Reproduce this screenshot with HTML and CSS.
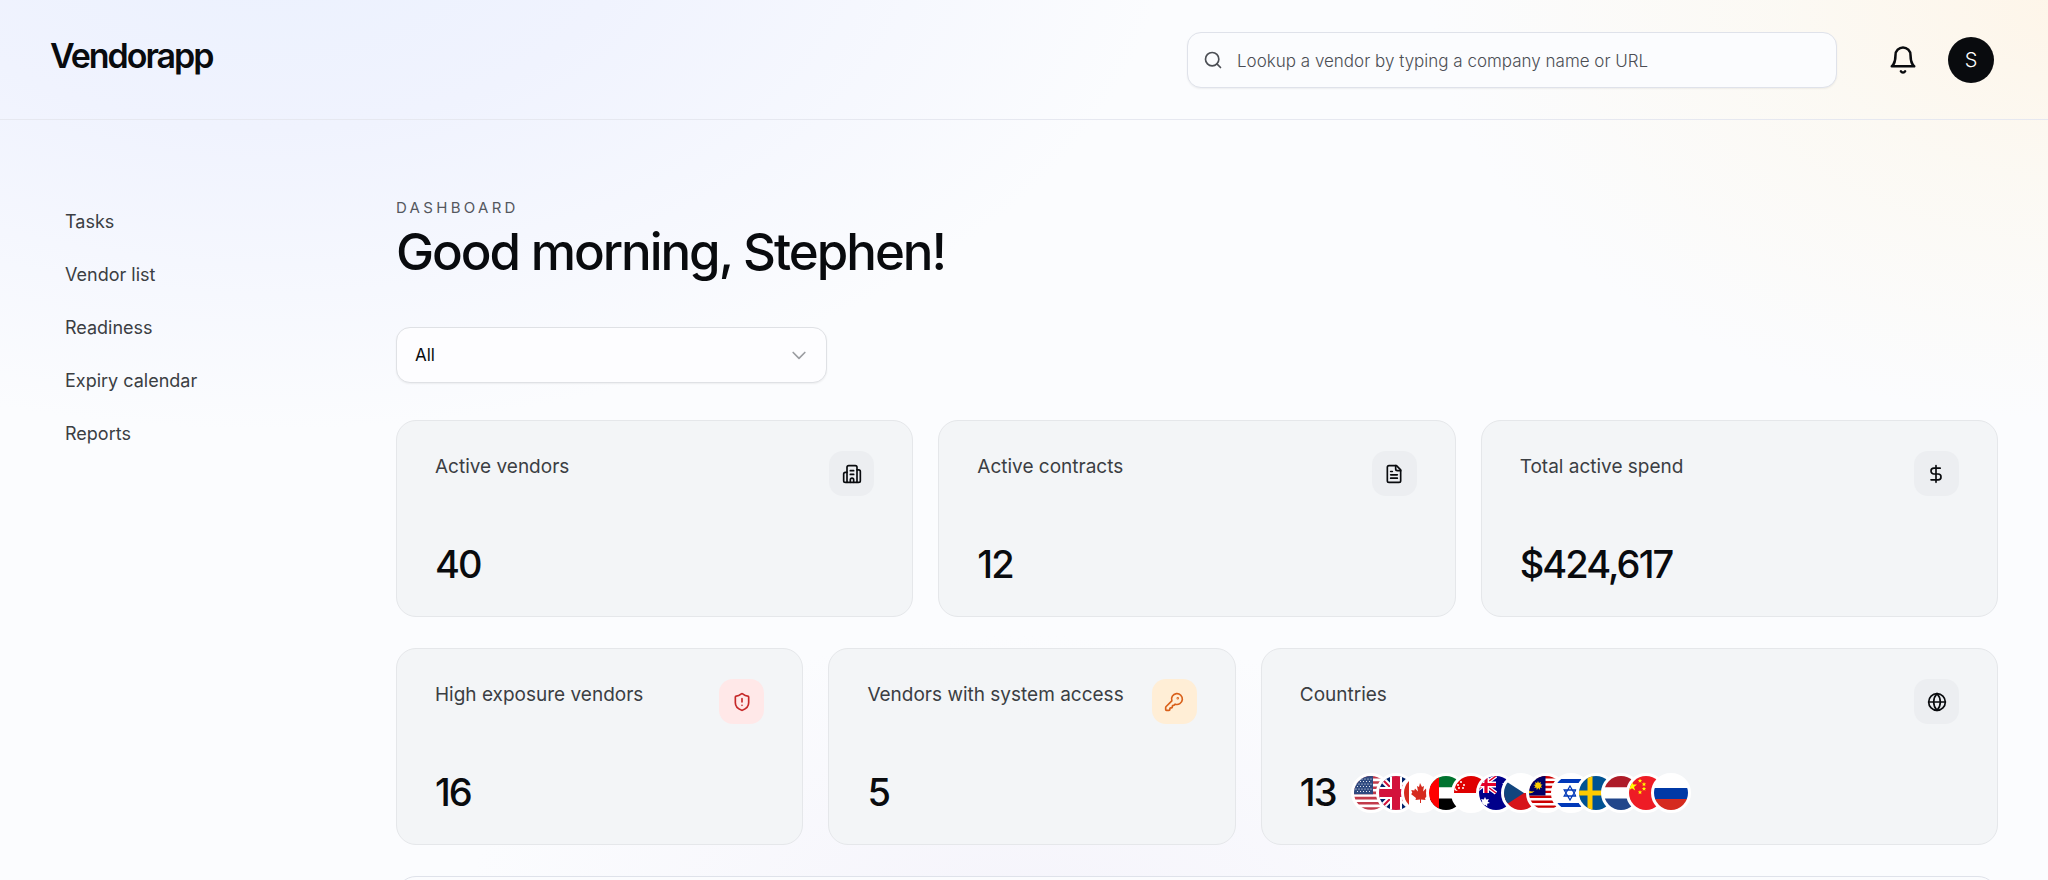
FILE: index.html
```html
<!DOCTYPE html>
<html lang="en">
<head>
    <meta charset="UTF-8">
    <meta name="viewport" content="width=device-width, initial-scale=1.0">
    <title>Vendorapp</title>
    <link rel="stylesheet" href="styles.css">
</head>
<body>
    <header class="header">
        <a href="#" class="logo">Vendorapp</a>
        <div class="header-right">
            <label class="search">
                <svg class="search-icon" viewBox="0 0 24 24"><circle cx="11" cy="11" r="8"/><path d="m21 21-4.3-4.3"/></svg>
                <input type="text" aria-label="Lookup a vendor" placeholder="Lookup a vendor by typing a company name or URL">
            </label>
            <button class="bell" aria-label="Notifications">
                <svg viewBox="0 0 24 24"><path d="M6 8a6 6 0 0 1 12 0c0 7 3 9 3 9H3s3-2 3-9"/><path d="M10.3 21a1.94 1.94 0 0 0 3.4 0"/></svg>
            </button>
            <button class="avatar">S</button>
        </div>
    </header>

    <div class="layout">
        <nav class="sidebar">
            <a href="#">Tasks</a>
            <a href="#">Vendor list</a>
            <a href="#">Readiness</a>
            <a href="#">Expiry calendar</a>
            <a href="#">Reports</a>
        </nav>

        <main class="main">
            <p class="eyebrow">DASHBOARD</p>
            <h1>Good morning, Stephen!</h1>

            <div class="filter">
                <select aria-label="Filter vendors">
                    <option>All</option>
                </select>
                <svg class="chevron" viewBox="0 0 24 24"><path d="m5 9 7 7 7-7"/></svg>
            </div>

            <div class="cards cards-top">
                <section class="card">
                    <div class="card-head">
                        <h2>Active vendors</h2>
                        <span class="icon">
                            <svg viewBox="0 0 24 24"><path d="M6 22V4a2 2 0 0 1 2-2h8a2 2 0 0 1 2 2v18Z"/><path d="M6 10H4a2 2 0 0 0-2 2v8a2 2 0 0 0 2 2h2"/><path d="M18 7h2a2 2 0 0 1 2 2v11a2 2 0 0 1-2 2h-2"/><path d="M10 8h4M10 12.500h4M10 22v-3a2 2 0 0 1 4 0v3"/></svg>
                        </span>
                    </div>
                    <p class="value">40</p>
                </section>
                <section class="card">
                    <div class="card-head">
                        <h2>Active contracts</h2>
                        <span class="icon">
                            <svg viewBox="0 0 24 24"><path d="M15 2H6a2 2 0 0 0-2 2v16a2 2 0 0 0 2 2h12a2 2 0 0 0 2-2V7Z"/><path d="M14 2v4a2 2 0 0 0 2 2h4"/><path d="M10 9H8M16 13H8M16 17H8"/></svg>
                        </span>
                    </div>
                    <p class="value">12</p>
                </section>
                <section class="card">
                    <div class="card-head">
                        <h2>Total active spend</h2>
                        <span class="icon">
                            <svg viewBox="0 0 24 24"><path d="M12 2v20"/><path d="M17 5H9.5a3.5 3.5 0 0 0 0 7h5a3.5 3.5 0 0 1 0 7H6"/></svg>
                        </span>
                    </div>
                    <p class="value">$424,617</p>
                </section>
            </div>

            <div class="cards cards-bottom">
                <section class="card">
                    <div class="card-head">
                        <h2>High exposure vendors</h2>
                        <span class="icon icon-red">
                            <svg viewBox="0 0 24 24"><path d="M20 13c0 5-3.5 7.5-7.66 8.95a1 1 0 0 1-.67-.01C7.5 20.5 4 18 4 13V6a1 1 0 0 1 1-1c2 0 4.5-1.2 6.24-2.72a1.17 1.17 0 0 1 1.52 0C14.51 3.81 17 5 19 5a1 1 0 0 1 1 1z"/><path d="M12 8v4M12 16h.01"/></svg>
                        </span>
                    </div>
                    <p class="value">16</p>
                </section>
                <section class="card">
                    <div class="card-head">
                        <h2>Vendors with system access</h2>
                        <span class="icon icon-orange">
                            <svg viewBox="0 0 24 24"><path d="M2.586 17.414A2 2 0 0 0 2 18.828V21a1 1 0 0 0 1 1h3a1 1 0 0 0 1-1v-1a1 1 0 0 1 1-1h1a1 1 0 0 0 1-1v-1a1 1 0 0 1 1-1h.172a2 2 0 0 0 1.414-.586l.814-.814a6.5 6.5 0 1 0-4-4z"/><circle cx="16.5" cy="7.5" r=".5"/></svg>
                        </span>
                    </div>
                    <p class="value">5</p>
                </section>
                <section class="card">
                    <div class="card-head">
                        <h2>Countries</h2>
                        <span class="icon">
                            <svg viewBox="0 0 24 24"><circle cx="12" cy="12" r="10"/><path d="M12 2a14.5 14.5 0 0 0 0 20 14.5 14.5 0 0 0 0-20"/><path d="M2 12h20"/></svg>
                        </span>
                    </div>
                    <div class="value-row">
                        <p class="value">13</p>
                        <div class="flags">
                            <!-- United States -->
                            <svg viewBox="0 0 34 34"><path fill="#fff" d="M0 0h34v34H0z"/><path stroke="#c23b4b" stroke-width="2.6" d="M0 1.3h34M0 6.5h34M0 11.7h34M0 16.9h34M0 22.1h34M0 27.3h34M0 32.5h34"/><path fill="#2f4a80" d="M0 0h19v18.2H0z"/><path stroke="#fff" stroke-width="1.2" stroke-linecap="round" stroke-dasharray="0 3" d="M2 3h16M3.5 5.500h14M2 8h16M3.5 10.500h14M2 13h16M3.5 15.500h14"/></svg>
                            <!-- United Kingdom -->
                            <svg viewBox="0 0 34 34"><path fill="#012169" d="M0 0h34v34H0z"/><path stroke="#fff" stroke-width="6" d="m0 0 34 34M34 0 0 34"/><path stroke="#d3123b" stroke-width="2" d="m0 0 34 34M34 0 0 34"/><path stroke="#fff" stroke-width="12" d="M17 0v34M0 17h34"/><path stroke="#d3123b" stroke-width="8" d="M17 0v34M0 17h34"/></svg>
                            <!-- Canada -->
                            <svg viewBox="0 0 34 34"><path fill="#fff" d="M0 0h34v34H0z"/><path fill="#d52b1e" d="M0 0h5v34H0zM29 0h5v34h-5zM16 7l2 4 2-1-1 5.500 3-3 .7 2 3-.5-1 3 1.300 1-5 4 .5 2-4.500-.6V27h-1v-3.600l-4.500.6.5-2-5-4 1.300-1-1-3 3 .5.7-2 3 3-1-5.500 2 1z"/></svg>
                            <!-- United Arab Emirates -->
                            <svg viewBox="0 0 34 34"><path fill="#fff" d="M0 0h34v34H0z"/><path fill="#00732f" d="M0 0h34v11.300H0z"/><path d="M0 22.600h34V34H0z"/><path fill="#f00" d="M0 0h10v34H0z"/></svg>
                            <!-- Singapore -->
                            <svg viewBox="0 0 34 34"><path fill="#fff" d="M0 0h34v34H0z"/><path fill="#df0000" d="M0 0h34v17H0z"/><path fill="#fff" d="M4 3a6 6 0 0 0 0 12 7 7 0 0 1 0-12"/><g fill="#fff"><circle cx="7" cy="6" r="1"/><circle cx="4" cy="9" r="1"/><circle cx="10" cy="9" r="1"/><circle cx="5" cy="12" r="1"/><circle cx="9" cy="12" r="1"/></g></svg>
                            <!-- Australia -->
                            <svg viewBox="0 0 34 34"><path fill="#00008b" d="M0 0h34v34H0z"/><path stroke="#fff" stroke-width="4" d="m-6 0 23 17M17 0-6 17"/><path stroke="#e4002b" stroke-width="1.500" d="m-6 0 23 17M17 0-6 17"/><path stroke="#fff" stroke-width="6" d="M7 0v17M0 8.500h17"/><path stroke="#e4002b" stroke-width="3.200" d="M7 0v17M0 8.500h17"/><path fill="#fff" d="m6 21 1.200 2.600 2.700-.7-1.200 2.500 2.200 1.700-2.700.6v2.800L6 28.800l-2.200 1.700v-2.800l-2.700-.6 2.200-1.700-1.200-2.500 2.700.7zM26 5l1 2 2-.3-1.200 1.700 1 2-2.100-.7L25 11V8.700L23 7.500l2.300-.5zM27 23l1 2 2-.3-1.200 1.700 1 2-2.100-.7L26 29v-2.300l-2-1.200 2.300-.5z"/></svg>
                            <!-- Czech Republic -->
                            <svg viewBox="0 0 34 34"><path fill="#fff" d="M0 0h34v17H0z"/><path fill="#d7141a" d="M0 17h34v17H0z"/><path fill="#11457e" d="M-6 0 20 17-6 34z"/></svg>
                            <!-- Malaysia -->
                            <svg viewBox="0 0 34 34"><path fill="#fff" d="M0 0h34v34H0z"/><path stroke="#c00" stroke-width="2.400" d="M0 1.200h34M0 6.100h34M0 11h34M0 15.900h34M0 20.800h34M0 25.700h34M0 30.600h34"/><path fill="#006" d="M0 0h16.500v19.500H0z"/><path fill="#fc0" d="m9 5 .9 2 2-1-.5 2.200 2.200.5-1.800 1.300 1.400 1.800-2.300-.2.200 2.300L9.200 12l-1.400 1.900-.4-2.300-2.200.4 1.200-1.900-2-1.200 2.300-.5-.7-2.200 2.100.9zM-1 13.500a6 6 0 0 0 6.500 1.500A6 6 0 0 1-1 17z"/></svg>
                            <!-- Israel -->
                            <svg viewBox="0 0 34 34"><path fill="#fff" d="M0 0h34v34H0z"/><path fill="#0038b8" d="M0 3h34v4H0zM0 27h34v4H0z"/><path fill="none" stroke="#0038b8" stroke-width="1.300" d="m16 10 5.800 10H10.200zM16 24l5.800-10H10.200z"/></svg>
                            <!-- Sweden -->
                            <svg viewBox="0 0 34 34"><path fill="#005293" d="M0 0h34v34H0z"/><path stroke="#fecb00" stroke-width="5" d="M11 0v34M0 17h34"/></svg>
                            <!-- Netherlands -->
                            <svg viewBox="0 0 34 34"><path fill="#fff" d="M0 0h34v34H0z"/><path fill="#ae1c28" d="M0 0h34v11.300H0z"/><path fill="#21468b" d="M0 22.600h34V34H0z"/></svg>
                            <!-- China -->
                            <svg viewBox="0 0 34 34"><path fill="#ee1c25" d="M0 0h34v34H0z"/><path fill="#ff0" d="m3 5 1.200 3.600H8l-3 2.300L6.200 14.500 3 12.300-.2 14.500 1 10.900-2 8.600h3.800zM11 2.500l.6 1.500 1.600.1-1.200 1 .4 1.600-1.400-.9-1.400.9.400-1.600-1.200-1 1.600-.1zM15 6l.6 1.500 1.600.1-1.200 1 .4 1.600-1.400-.9-1.400.9.400-1.600-1.200-1 1.600-.1zM15 10.500l.6 1.500 1.600.1-1.200 1 .4 1.600-1.400-.9-1.400.9.400-1.600-1.200-1 1.600-.1zM11 14l.6 1.500 1.600.1-1.200 1 .4 1.600-1.400-.9-1.400.9.400-1.600-1.200-1 1.600-.1z"/></svg>
                            <!-- Russia -->
                            <svg viewBox="0 0 34 34"><path fill="#fff" d="M0 0h34v12H0z"/><path fill="#0039a6" d="M0 12h34v11H0z"/><path fill="#d52b1e" d="M0 23h34v11H0z"/></svg>
                        </div>
                    </div>
                </section>
            </div>

            <section class="panel"></section>
        </main>
    </div>
</body>
</html>
```
FILE: styles.css
```css
* {
    box-sizing: border-box;
}

body {
    margin: 0;
    height: 100vh;
    overflow: hidden;
    font-family: Inter, "Liberation Sans", sans-serif;
    color: #090b0e;
    background-color: #fbfcfe;
    background-image:
        radial-gradient(ellipse 900px 500px at 13% -8%, #ebf1fe, #f0f3fe 40%, rgba(251, 252, 254, 0)),
        radial-gradient(ellipse 660px 420px at 102% 0%, #fef5e8, rgba(252, 248, 239, 0.7) 45%, rgba(251, 252, 254, 0)),
        radial-gradient(ellipse 560px 280px at 50% 104%, #f5f4fb, rgba(251, 252, 254, 0));
}

h1, h2, p {
    margin: 0;
}

button, input, select {
    font-family: inherit;
    color: inherit;
}

svg {
    display: block;
}

.header {
    height: 120px;
    padding: 0 54px 0 50px;
    display: flex;
    align-items: center;
    justify-content: space-between;
    border-bottom: 1px solid #e6e8f0;
}

.logo {
    font-size: 34px;
    line-height: 40px;
    font-weight: 600;
    letter-spacing: -0.06em;
    color: inherit;
    text-decoration: none;
    padding-bottom: 8px;
}

.header-right {
    display: flex;
    align-items: center;
}

.search {
    display: flex;
    align-items: center;
    gap: 14px;
    width: 650px;
    height: 56px;
    padding: 0 15px;
    background: #fbfcfe;
    border: 1px solid #dfe2ea;
    border-radius: 14px;
    box-shadow: 0 1px 2px rgba(0, 0, 0, 0.06);
}

.search input {
    flex: 1;
    border: 0;
    padding: 2px 0 0;
    outline: none;
    background: none;
    font-size: 17px;
    font-weight: 300;
}

.search input::placeholder {
    color: #4b4e54;
    opacity: 1;
}

.search-icon, .bell svg, .chevron, .icon svg {
    fill: none;
    stroke: currentColor;
    stroke-width: 2;
    stroke-linecap: round;
    stroke-linejoin: round;
}

.search-icon {
    width: 20px;
    height: 20px;
    color: #4b4e54;
}

.bell {
    margin: 0 30px 0 51px;
    padding: 0;
    border: 0;
    background: none;
    cursor: pointer;
}

.bell svg {
    width: 30px;
    height: 30px;
}

.avatar {
    width: 46px;
    height: 46px;
    padding: 0;
    border: 0;
    border-radius: 50%;
    background: #090b0e;
    color: #fff;
    font-size: 20px;
    font-weight: 300;
    cursor: pointer;
}

.layout {
    display: flex;
    padding: 78px 50px 0 65px;
}

.sidebar {
    width: 331px;
    flex-shrink: 0;
    display: flex;
    flex-direction: column;
    gap: 29px;
    padding-top: 12px;
}

.sidebar a {
    font-size: 18px;
    line-height: 24px;
    color: #3b3e43;
    text-decoration: none;
}

.main {
    flex: 1;
}

.eyebrow {
    font-size: 15px;
    line-height: 20px;
    letter-spacing: 0.22em;
    color: #55585e;
}

h1 {
    font-size: 51px;
    line-height: 64px;
    font-weight: 500;
    letter-spacing: -0.04em;
    margin-top: 2px;
}

.filter {
    position: relative;
    width: 431px;
    margin: 43px 0 37px;
}

.filter select {
    display: block;
    appearance: none;
    width: 100%;
    height: 56px;
    padding: 0 18px;
    background: #fdfdff;
    border: 1px solid #dfe1e5;
    border-radius: 14px;
    box-shadow: 0 1px 2px rgba(0, 0, 0, 0.06);
    font-size: 17px;
}

.chevron {
    position: absolute;
    right: 18px;
    top: 18px;
    width: 20px;
    height: 20px;
    color: #9b9da1;
    pointer-events: none;
}

.cards {
    display: grid;
    gap: 25px;
    margin-bottom: 31px;
}

.cards-top {
    grid-template-columns: repeat(3, 1fr);
}

.cards-bottom {
    grid-template-columns: 21fr 21fr 38fr;
}

.card {
    min-height: 197px;
    padding: 30px 38px 28px;
    display: flex;
    flex-direction: column;
    justify-content: space-between;
    background: #f3f5f7;
    border: 1px solid #e5e7ea;
    border-radius: 20px;
}

.card-head {
    display: flex;
    justify-content: space-between;
}

.card h2 {
    font-size: 19px;
    line-height: 31px;
    font-weight: 400;
    color: #3b3e43;
}

.icon {
    width: 45px;
    height: 45px;
    border-radius: 14px;
    display: flex;
    align-items: center;
    justify-content: center;
    background: #eceef1;
}

.icon svg {
    width: 20px;
    height: 20px;
}

.icon-red {
    background: #ffe8e8;
    color: #c62828;
}

.icon-orange {
    background: #ffeed6;
    color: #d9601a;
}

.value {
    font-size: 38px;
    line-height: 48px;
    font-weight: 500;
    letter-spacing: -0.05em;
}

.value-row {
    display: flex;
    align-items: center;
    gap: 15px;
}

.flags {
    display: flex;
    padding-top: 2px;
}

.flags svg {
    width: 40px;
    height: 40px;
    border: 3px solid #fff;
    border-radius: 50%;
    background: #fff;
}

.flags svg + svg {
    margin-left: -15px;
}

.panel {
    height: 300px;
    background: #fbfcfe;
    border: 1px solid #dfe2ea;
    border-radius: 20px;
}
```
